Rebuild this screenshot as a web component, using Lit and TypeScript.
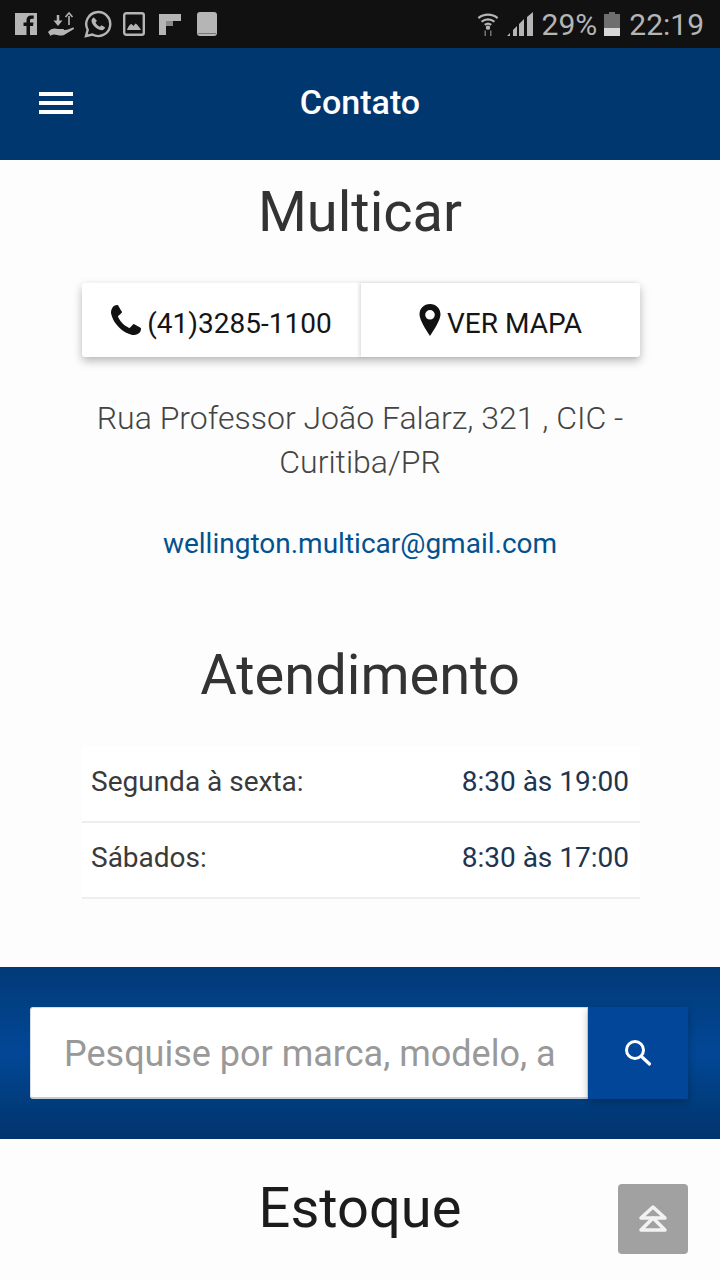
import { css, html, LitElement } from 'lit';
import { customElement } from 'lit/decorators.js';

@customElement('app-root')
export class AppRoot extends LitElement {
  static styles = css`
    :host {
      display: block;
      position: relative;
      width: 720px;
      height: 1280px;
      overflow: hidden;
      background: #fdfdfd;
      font-family: Roboto, 'Liberation Sans', sans-serif;
      color: #333;
    }
    * { box-sizing: border-box; }

    .status {
      height: 48px;
      background: #111;
      display: flex;
      align-items: center;
      justify-content: space-between;
      padding: 0 16px 0 14px;
      color: #b5b5b5;
    }
    .status-left, .status-right { display: flex; align-items: center; }
    .status svg { display: block; }
    .hand { margin-left: 9px; }
    .whats { margin-left: 9px; }
    .image { margin-left: 11px; }
    .flip { margin-left: 13px; }
    .doc { margin-left: 14px; }
    .status-right { font-size: 30px; }
    .bars { margin-left: 8px; }
    .pct { margin: 0 7px 0 9px; }
    .clock { margin-left: 9px; }

    .appbar {
      height: 112px;
      background: #01376f;
      display: flex;
      align-items: center;
      justify-content: center;
      position: relative;
      color: #fff;
      font-size: 34px;
      font-weight: 500;
      padding-bottom: 4px;
    }
    .menu {
      position: absolute;
      left: 39px;
      top: 44px;
      display: block;
    }

    .contact { display: flex; flex-direction: column; align-items: center; }
    h1 {
      margin: 0;
      font-weight: 400;
      font-size: 56px;
      line-height: 64px;
      color: #333;
    }
    .name { margin-top: 20px; }
    .buttons {
      margin: 39px 0 0 2px;
      width: 558px;
      height: 74px;
      display: flex;
      border-radius: 3px;
      background: #fff;
      box-shadow: 0 4px 10px rgba(0, 0, 0, 0.28);
    }
    .btn {
      flex: 1;
      display: flex;
      align-items: center;
      justify-content: center;
      gap: 6px;
      font-size: 28px;
      color: #151515;
    }
    .btn span { padding-top: 6px; }
    .btn + .btn { box-shadow: -2px 0 3px rgba(0, 0, 0, 0.12); }
    .address {
      margin-top: 39px;
      width: 558px;
      text-align: center;
      font-size: 32px;
      line-height: 44px;
      font-weight: 300;
      color: #444;
    }
    .mail {
      margin-top: 40px;
      font-size: 28px;
      line-height: 40px;
      color: #02528f;
    }
    .hours-title { margin-top: 79px; }
    .hours { margin: 40px 0 0 2px; width: 558px; }
    .row {
      height: 76px;
      display: flex;
      align-items: center;
      justify-content: space-between;
      padding: 0 11px 6px 9px;
      background: #fff;
      border-bottom: 2px solid #eee;
      font-size: 28px;
      color: #3a3a3a;
    }
    .time { color: #1c3550; }

    .search {
      margin-top: 68px;
      height: 172px;
      padding: 40px 32px 0 30px;
      background: linear-gradient(#013a78 0%, #024796 50%, #01346c 100%);
      display: flex;
      align-items: flex-start;
    }
    .input {
      width: 558px;
      height: 92px;
      background: #fff;
      border-radius: 3px 0 0 3px;
      border: 1px solid #d5dbe3;
      border-bottom: 2px solid #c4ccd8;
      padding: 2px 33px 0 33px;
      font: inherit;
      font-size: 36px;
      outline: none;
    }
    .input::placeholder { color: #999; opacity: 1; }
    .go {
      width: 100px;
      height: 92px;
      background: #02469a;
      display: flex;
      align-items: center;
      justify-content: center;
      box-shadow: 0 3px 8px rgba(0, 0, 0, 0.25);
    }

    .stock { text-align: center; margin-top: 37px; }
    .stock h1 { color: #1c1c1c; }

    .top {
      position: absolute;
      left: 618px;
      top: 1184px;
      width: 70px;
      height: 70px;
      border-radius: 4px;
      background: #a1a1a1;
      display: flex;
      align-items: center;
      justify-content: center;
    }
  `;

  render() {
    return html`
      <div class="status">
        <div class="status-left">
          <svg width="24" height="24" viewBox="0 0 24 24"><path fill="#b5b5b5" d="M1 1h22v22h-7v-9h3l.5-3.500H16V8.500c0-1 .4-1.700 1.800-1.700h1.900V3.600c-.5 0-1.500-.2-2.700-.2-2.700 0-4.500 1.700-4.500 4.600v2.500H9.500V14h3v9H1z"/></svg>
          <svg class="hand" width="28" height="26" viewBox="0 0 28 26" fill="none"><path fill="#b5b5b5" d="M1 21c3-4 7-4 10-3h5c1.500 0 1.500 2 0 2h-4l9-1.500 5-2c1-.3 1.500 1 .5 1.700L17 24c-4 1.500-7-.5-10-.5-2 0-3 1-3.500 1.500z"/><path stroke="#b5b5b5" stroke-width="2.500" d="M11 4v8"/><path fill="#b5b5b5" d="M6.500 9.500h9L11 15z"/><path stroke="#b5b5b5" stroke-width="1.600" d="M22 14V5M18.500 6 22 2l3.500 4"/></svg>
          <svg class="whats" width="28" height="28" viewBox="0 0 28 28" fill="none"><path stroke="#b5b5b5" stroke-width="2.400" d="M2 26l1.700-6.200A12 12 0 1 1 8.300 24.500z"/><path fill="#b5b5b5" d="M10 7.500c-1 0-2.500 1.300-2.500 3.300 0 3 4.500 9 10 9.500 2 0 3.500-1.500 3.500-3l-3.500-2-1.500 1.500c-2-.7-3.800-2.600-4.500-4.500L13 11z"/></svg>
          <svg class="image" width="22" height="24" viewBox="0 0 22 24" fill="none"><rect x="1.200" y="1.200" width="19.600" height="21.600" rx="2" stroke="#b5b5b5" stroke-width="2.400"/><path fill="#b5b5b5" d="M4 18c1-3 3-6 4.500-6l2 2 2-2.500c2 1 4 4 5.500 6.500z"/></svg>
          <svg class="flip" width="24" height="24" viewBox="0 0 24 24"><path fill="#b5b5b5" d="M1 2h22v7H15v5H8v9H1z"/><path fill="#8a8a8a" d="M8 9h7v5H8z"/></svg>
          <svg class="doc" width="22" height="26" viewBox="0 0 22 26"><path fill="#b5b5b5" d="M4 1h14a3 3 0 0 1 3 3v18a3 3 0 0 1-3 3H4a3 3 0 0 1-3-3V4a3 3 0 0 1 3-3z"/><path stroke="#777" stroke-width="1" d="M2 22.500h18"/></svg>
        </div>
        <div class="status-right">
          <svg width="22" height="26" viewBox="0 0 24 28" fill="none" stroke="#b5b5b5" stroke-width="2.400"><path d="M1.500 7.500c6-5 15-5 21 0M5 11.500c4-3.500 10-3.500 14 0M8.500 15c2-1.700 5-1.700 7 0"/><circle cx="12" cy="18" r="1.200" fill="#b5b5b5"/><path stroke="#777" stroke-width="1.600" d="M9 21v6M15 21v6"/></svg>
          <svg class="bars" width="26" height="24" viewBox="0 0 26 24"><path fill="#b5b5b5" d="M0 24l3-3v3zM6 24v-6l4-4v10zM12 24V12l5-5v17zM20 24V5l6-5v24z"/></svg>
          <span class="pct">29%</span>
          <svg width="16" height="24" viewBox="0 0 16 24"><path fill="#6f6f6f" d="M5 0h6v2h5v14H0V2h5z"/><path fill="#d8d8d8" d="M0 16h16v8H0z"/></svg>
          <span class="clock">22:19</span>
        </div>
      </div>

      <header class="appbar">
        <svg class="menu" width="34" height="23" viewBox="0 0 34 23" fill="#fff"><rect width="34" height="4"/><rect y="9" width="34" height="4"/><rect y="18" width="34" height="4"/></svg>
        Contato
      </header>

      <section class="contact">
        <h1 class="name">Multicar</h1>
        <div class="buttons">
          <div class="btn">
            <svg width="30" height="30" viewBox="192 128 1408 1408"><path fill="#111" d="M1600 1240q0 27-10 70.500t-21 68.500q-21 50-122 106-94 51-186 51-27 0-53-3.500t-57.500-12.500-47-14.500-55.500-20.500-49-18q-98-35-175-83-127-79-264-216t-216-264q-48-77-83-175-3-9-18-49t-20.500-55.500-14.500-47-12.500-57.500-3.500-53q0-92 51-186 56-101 106-122 25-11 68.500-21t70.500-10q14 0 21 3 18 6 53 76 11 19 30 54t35 63.500 31 53.500q3 4 17.500 25t21.500 35.500 7 28.500q0 20-28.500 50t-62 55-62 53-28.500 46q0 9 5 22.500t8.500 20.500 14 24 11.500 19q76 137 174 235t235 174q2 1 19 11.500t24 14 20.500 8.500 22.500 5q18 0 46-28.500t53-62 55-62 50-28.500q14 0 28.500 7t35.500 21.500 25 17.500q25 15 53.500 31t63.500 35 54 30q70 35 76 53 3 7 3 21z"/></svg>
            <span>(41)3285-1100</span>
          </div>
          <div class="btn">
            <svg width="22" height="32" viewBox="0 0 22 32"><path fill="#111" fill-rule="evenodd" d="M11 0C5 0 .5 4.600.5 10.500c0 5 6.500 15.500 10.500 21.500 4-6 10.500-16.500 10.500-21.500C21.500 4.600 17 0 11 0zm0 6a4.800 4.800 0 1 1 0 9.600A4.800 4.800 0 0 1 11 6z"/></svg>
            <span>VER MAPA</span>
          </div>
        </div>
        <div class="address">Rua Professor João Falarz, 321 , CIC - Curitiba/PR</div>
        <div class="mail">wellington.multicar@gmail.com</div>
        <h1 class="hours-title">Atendimento</h1>
        <div class="hours">
          <div class="row"><span>Segunda à sexta:</span><span class="time">8:30 às 19:00</span></div>
          <div class="row"><span>Sábados:</span><span class="time">8:30 às 17:00</span></div>
        </div>
      </section>

      <section class="search">
        <input class="input" type="text" placeholder="Pesquise por marca, modelo, ano" />
        <div class="go">
          <svg width="28" height="28" viewBox="0 0 28 28" fill="none" stroke="#fff"><circle cx="11" cy="11" r="8.500" stroke-width="3"/><path stroke-width="3.200" stroke-linecap="round" d="M17.500 17.500 25.500 25"/></svg>
        </div>
      </section>

      <section class="stock"><h1>Estoque</h1></section>

      <div class="top">
        <svg width="32" height="32" viewBox="0 0 32 32" fill="none" stroke="#f2f2f2" stroke-width="3.500" stroke-linejoin="round"><path d="M16 4 28 15H4z"/><path d="M16 15 28 27H4z"/></svg>
      </div>
    `;
  }
}
